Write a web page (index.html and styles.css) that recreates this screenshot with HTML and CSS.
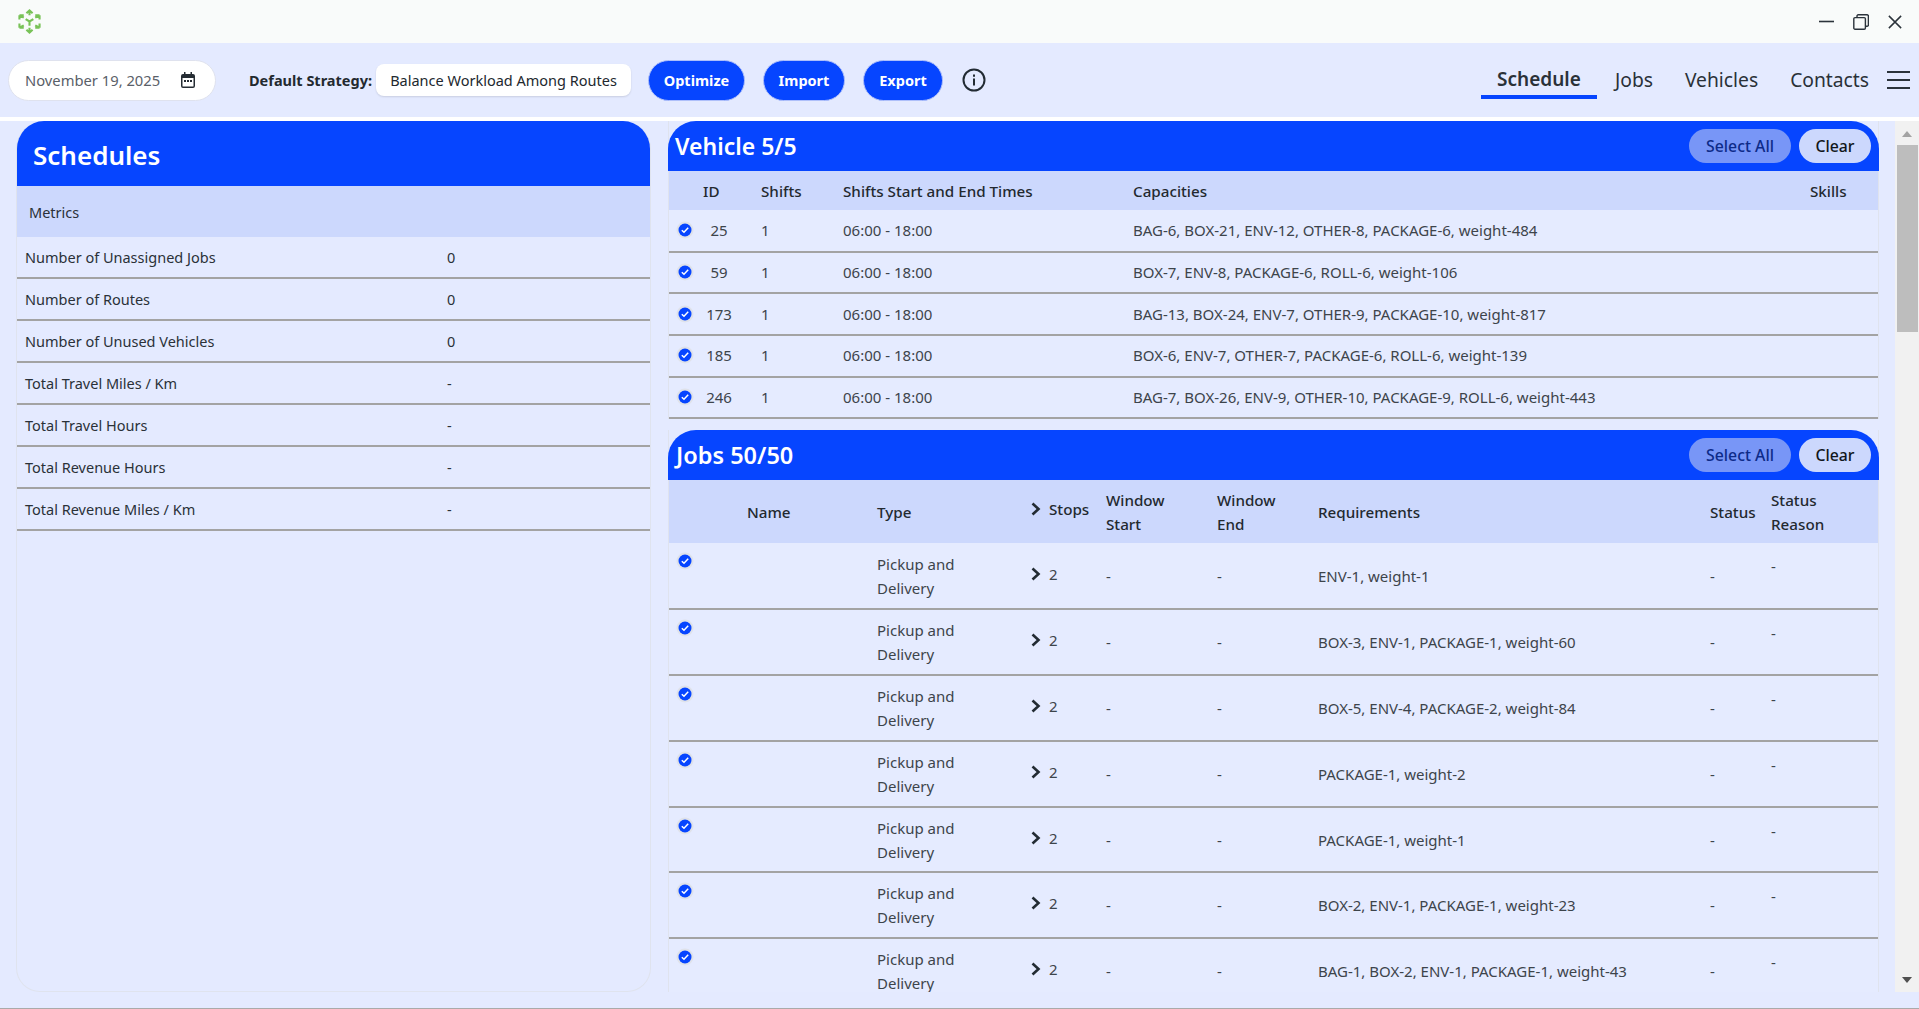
FILE: index.html
```html
<!DOCTYPE html>
<html lang="en">
<head>
<meta charset="utf-8">
<title>Schedule</title>
<link rel="stylesheet" href="styles.css">
</head>
<body>
<svg width="0" height="0" class="defs">
  <defs>
    <symbol id="chk" viewBox="0 0 18 18">
      <circle cx="9" cy="9" r="8.5" fill="#dfe2ea"/>
      <circle cx="9" cy="9" r="6.5" fill="#0645ff"/>
      <path d="M5.8 9.2 8 11.3 12.2 6.8" fill="none" stroke="#fff" stroke-width="1.5"/>
    </symbol>
    <symbol id="chev" viewBox="0 0 12 14">
      <path d="M2.500 1.500 8.500 7 2.500 12.500" fill="none" stroke="#222b33" stroke-width="2.600"/>
    </symbol>
  </defs>
</svg>
<header class="titlebar">
  <svg class="logo" viewBox="0 0 24 26" width="23" height="25" fill="none" stroke="#78c257" stroke-width="2.200">
    <path d="M12 1.500V6.500M8.800 4.500 12 1.500l3.200 3"/>
    <path d="M12 24.500V19.500M8.800 21.500 12 24.500l3.200-3"/>
    <path d="M1.500 6.500 6 9M1.500 6.500H6M1.500 6.500v4.500"/>
    <path d="M22.500 6.500 18 9M22.500 6.500H18M22.500 6.500v4.500"/>
    <path d="M1.500 19.500 6 17M1.500 19.500H6M1.500 19.500V15"/>
    <path d="M22.500 19.500 18 17M22.500 19.500H18M22.500 19.500V15"/>
    <path d="M8 10.500 12 13l4-2.500M12 13v4.500"/>
  </svg>
  <div class="winctl">
    <svg viewBox="0 0 15 15" width="15" height="15" stroke="#2b333b" fill="none" stroke-width="1.6"><path d="M0 7.500h15"/></svg>
    <svg viewBox="0 0 16 16" width="16" height="16" stroke="#2b333b" fill="none" stroke-width="1.4"><rect x=".8" y="3.6" width="11.6" height="11.6" rx="1.2"/><path d="M4 3.4V2a1.2 1.2 0 0 1 1.2-1.2h9A1.2 1.2 0 0 1 15.400 2v9a1.200 1.200 0 0 1-1.200 1.200h-1.600"/></svg>
    <svg viewBox="0 0 16 16" width="14" height="14" stroke="#2b333b" fill="none" stroke-width="1.7"><path d="M1 1 15 15M15 1 1 15"/></svg>
  </div>
</header>

<nav class="toolbar">
  <div class="datepill">
    <span>November 19, 2025</span>
    <svg viewBox="0 0 16 16" width="16" height="16"><path fill="#252c33" d="M4 0h1.500v2h5V0H12v2h1a2 2 0 0 1 2 2v10a2 2 0 0 1-2 2H3a2 2 0 0 1-2-2V4a2 2 0 0 1 2-2h1zM2.500 6v8a.5.5 0 0 0 .5.5h10a.5.5 0 0 0 .5-.5V6z"/><path fill="#252c33" d="M4 8h2v2H4zM7 8h2v2H7zM10 8h2v2h-2z"/></svg>
  </div>
  <label class="strategy-label">Default Strategy:</label>
  <div class="strategy">Balance Workload Among Routes</div>
  <div class="actions">
    <button class="action w-opt">Optimize</button>
    <button class="action w-imp">Import</button>
    <button class="action w-exp">Export</button>
  </div>
  <svg class="info" viewBox="0 0 24 24" width="24" height="24" fill="none" stroke="#222b33" stroke-width="2"><circle cx="12" cy="12" r="10.500"/><path d="M12 10.500v7"/><path d="M12 6.500v2.200"/></svg>
  <div class="tabs">
    <a class="tab active">Schedule</a>
    <a class="tab">Jobs</a>
    <a class="tab">Vehicles</a>
    <a class="tab">Contacts</a>
  </div>
  <svg class="menu" viewBox="0 0 23 18" width="23" height="18" stroke="#2b333b" stroke-width="2.200"><path d="M0 1h23M0 9h23M0 17h23"/></svg>
</nav>
<div class="whiteline"></div>

<main class="content">
  <section class="schedules">
    <h1 class="sched-title">Schedules</h1>
    <div class="metrics-head">Metrics</div>
    <div class="mrow"><span>Number of Unassigned Jobs</span><span>0</span></div>
    <div class="mrow"><span>Number of Routes</span><span>0</span></div>
    <div class="mrow"><span>Number of Unused Vehicles</span><span>0</span></div>
    <div class="mrow"><span>Total Travel Miles / Km</span><span>-</span></div>
    <div class="mrow"><span>Total Travel Hours</span><span>-</span></div>
    <div class="mrow"><span>Total Revenue Hours</span><span>-</span></div>
    <div class="mrow"><span>Total Revenue Miles / Km</span><span>-</span></div>
  </section>

  <div class="scrollarea">
    <section class="card">
      <div class="cardhead"><h2>Vehicle 5/5</h2><div class="cardbtns"><button class="selall">Select All</button><button class="clear">Clear</button></div></div>
      <table class="vt">
        <thead><tr><th class="v0"></th><th class="v1">ID</th><th class="v2">Shifts</th><th class="v3">Shifts Start and End Times</th><th class="v4">Capacities</th><th class="v5">Skills</th></tr></thead>
        <tbody>
          <tr><td class="chk"><svg width="18" height="18"><use href="#chk"/></svg></td><td class="num">25</td><td>1</td><td>06:00 - 18:00</td><td>BAG-6, BOX-21, ENV-12, OTHER-8, PACKAGE-6, weight-484</td><td></td></tr>
          <tr><td class="chk"><svg width="18" height="18"><use href="#chk"/></svg></td><td class="num">59</td><td>1</td><td>06:00 - 18:00</td><td>BOX-7, ENV-8, PACKAGE-6, ROLL-6, weight-106</td><td></td></tr>
          <tr><td class="chk"><svg width="18" height="18"><use href="#chk"/></svg></td><td class="num">173</td><td>1</td><td>06:00 - 18:00</td><td>BAG-13, BOX-24, ENV-7, OTHER-9, PACKAGE-10, weight-817</td><td></td></tr>
          <tr><td class="chk"><svg width="18" height="18"><use href="#chk"/></svg></td><td class="num">185</td><td>1</td><td>06:00 - 18:00</td><td>BOX-6, ENV-7, OTHER-7, PACKAGE-6, ROLL-6, weight-139</td><td></td></tr>
          <tr><td class="chk"><svg width="18" height="18"><use href="#chk"/></svg></td><td class="num">246</td><td>1</td><td>06:00 - 18:00</td><td>BAG-7, BOX-26, ENV-9, OTHER-10, PACKAGE-9, ROLL-6, weight-443</td><td></td></tr>
        </tbody>
      </table>
    </section>

    <section class="card jobs">
      <div class="cardhead"><h2>Jobs 50/50</h2><div class="cardbtns"><button class="selall">Select All</button><button class="clear">Clear</button></div></div>
      <table class="jt">
        <thead><tr><th class="j0"></th><th class="j1">Name</th><th class="j2">Type</th><th class="j3"><span class="stops"><svg width="12" height="14"><use href="#chev"/></svg>Stops</span></th><th class="j4">Window Start</th><th class="j5">Window End</th><th class="j6">Requirements</th><th class="j7">Status</th><th class="j8">Status Reason</th></tr></thead>
        <tbody>
          <tr><td class="top chk"><svg width="18" height="18"><use href="#chk"/></svg></td><td></td><td class="type">Pickup and Delivery</td><td><span class="stops"><svg width="12" height="14"><use href="#chev"/></svg>2</span></td><td>-</td><td>-</td><td>ENV-1, weight-1</td><td>-</td><td class="top">-</td></tr>
          <tr><td class="top chk"><svg width="18" height="18"><use href="#chk"/></svg></td><td></td><td class="type">Pickup and Delivery</td><td><span class="stops"><svg width="12" height="14"><use href="#chev"/></svg>2</span></td><td>-</td><td>-</td><td>BOX-3, ENV-1, PACKAGE-1, weight-60</td><td>-</td><td class="top">-</td></tr>
          <tr><td class="top chk"><svg width="18" height="18"><use href="#chk"/></svg></td><td></td><td class="type">Pickup and Delivery</td><td><span class="stops"><svg width="12" height="14"><use href="#chev"/></svg>2</span></td><td>-</td><td>-</td><td>BOX-5, ENV-4, PACKAGE-2, weight-84</td><td>-</td><td class="top">-</td></tr>
          <tr><td class="top chk"><svg width="18" height="18"><use href="#chk"/></svg></td><td></td><td class="type">Pickup and Delivery</td><td><span class="stops"><svg width="12" height="14"><use href="#chev"/></svg>2</span></td><td>-</td><td>-</td><td>PACKAGE-1, weight-2</td><td>-</td><td class="top">-</td></tr>
          <tr><td class="top chk"><svg width="18" height="18"><use href="#chk"/></svg></td><td></td><td class="type">Pickup and Delivery</td><td><span class="stops"><svg width="12" height="14"><use href="#chev"/></svg>2</span></td><td>-</td><td>-</td><td>PACKAGE-1, weight-1</td><td>-</td><td class="top">-</td></tr>
          <tr><td class="top chk"><svg width="18" height="18"><use href="#chk"/></svg></td><td></td><td class="type">Pickup and Delivery</td><td><span class="stops"><svg width="12" height="14"><use href="#chev"/></svg>2</span></td><td>-</td><td>-</td><td>BOX-2, ENV-1, PACKAGE-1, weight-23</td><td>-</td><td class="top">-</td></tr>
          <tr><td class="top chk"><svg width="18" height="18"><use href="#chk"/></svg></td><td></td><td class="type">Pickup and Delivery</td><td><span class="stops"><svg width="12" height="14"><use href="#chev"/></svg>2</span></td><td>-</td><td>-</td><td>BAG-1, BOX-2, ENV-1, PACKAGE-1, weight-43</td><td>-</td><td class="top">-</td></tr>
        </tbody>
      </table>
    </section>
  </div>

  <div class="scrollbar">
    <div class="arrow up"></div>
    <div class="thumb"></div>
    <div class="arrow down"></div>
  </div>
</main>
</body>
</html>
```

FILE: styles.css
```css
* { box-sizing: border-box; }
html, body { margin: 0; height: 100%; overflow: hidden; }
body {
  background: #e4eaff;
  color: #2a3138;
  font-family: "Noto Sans", "Liberation Sans", sans-serif;
  font-size: 14.500px;
  height: 1009px;
  display: flex;
  flex-direction: column;
  border-bottom: 1px solid #aaaaaa;
}
.defs { position: absolute; }
button { font-family: inherit; border: 0; }

.titlebar {
  height: 43px;
  background: #f9fbfa;
  display: flex;
  align-items: center;
  justify-content: space-between;
  padding: 0 17px 0 18px;
  flex: none;
}
.winctl { display: flex; align-items: center; gap: 19px; }

.toolbar {
  height: 74px;
  flex: none;
  background: #e4eaff;
  display: flex;
  align-items: center;
  padding: 0 9px 0 8px;
}
.datepill {
  width: 208px;
  height: 41px;
  background: #fff;
  border: 1px solid #dfe2ee;
  border-radius: 21px;
  display: flex;
  align-items: center;
  justify-content: space-between;
  padding: 0 19px 0 16px;
  color: #5a6068;
  font-size: 14.750px;
}
.strategy-label { margin-left: 33px; font-weight: 700; width: 127px; white-space: nowrap; color: #23292f; }
.strategy {
  width: 255px;
  height: 32px;
  background: #fff;
  border-radius: 8px;
  box-shadow: 0 1px 2px rgba(0,0,0,.12);
  display: flex;
  align-items: center;
  justify-content: center;
  white-space: nowrap;
  color: #22282e;
}
.actions { display: flex; gap: 18px; margin-left: 17px; }
.action {
  height: 41px;
  border-radius: 21px;
  background: #0645ff;
  color: #fff;
  font-weight: 700;
  font-size: 14.500px;
  border: 1px solid #aebffa;
  padding: 0;
}
.w-opt { width: 97px; }
.w-imp { width: 82px; }
.w-exp { width: 80px; }
.info { margin-left: 19px; }
.tabs { margin-left: auto; margin-right: 2px; display: flex; align-items: center; }
.tab { font-size: 19.250px; color: #2a3138; padding: 0 16px; height: 36px; line-height: 36px; }
.tab.active {
  font-size: 19px;
  font-weight: 600;
  width: 116px;
  padding: 0;
  text-align: center;
  border-bottom: 4px solid #0645ff;
  line-height: 32px;
  margin-top: 2px;
  margin-right: 2px;
}

.whiteline { height: 4px; background: #fff; flex: none; }

.content { display: flex; flex: 1; min-height: 0; align-items: flex-start; padding-bottom: 16px; }

.schedules {
  width: 635px;
  height: 871px;
  margin-left: 16px;
  border: 1px solid #dfe3ee;
  border-top: 0;
  border-radius: 28px 28px 24px 24px;
  overflow: hidden;
  flex: none;
}
.sched-title {
  margin: 0;
  height: 65px;
  background: #0645ff;
  color: #fff;
  font-size: 26px;
  font-weight: 600;
  line-height: 69px;
  padding-left: 16px;
}
.metrics-head { height: 51px; background: #ccd8fd; line-height: 52px; padding-left: 12px; }
.mrow {
  height: 42px;
  border-bottom: 2px solid #a3a3a3;
  display: flex;
  align-items: center;
  padding-left: 8px;
}
.mrow span:first-child { width: 422px; }

.scrollarea {
  width: 1211px;
  margin-left: 17px;
  height: 871px;
  overflow: hidden;
  flex: none;
}
.card { border-right: 1px solid #dfe3ee; border-left: 1px solid #dfe3ee; }
.card.jobs { margin-top: 11px; }
.cardhead {
  height: 50px;
  background: #0645ff;
  border-radius: 28px 28px 0 0;
  display: flex;
  align-items: center;
  justify-content: space-between;
  padding: 0 8px 0 7px;
  margin: 0 -1px;
}
.cardhead h2 { margin: 0; color: #fff; font-size: 23px; font-weight: 600; }
.jobs .cardhead h2 { font-size: 23.500px; margin-left: 1px; }
.cardbtns { display: flex; gap: 8px; }
.selall, .clear { height: 34px; border-radius: 17px; font-size: 15.800px; font-weight: 500; padding: 0; }
.selall { width: 102px; background: #7896f7; color: #0d2a88; }
.clear { width: 72px; background: #ccd8fd; color: #11161b; }

table { border-collapse: collapse; table-layout: fixed; width: 100%; }
th { background: #ccd8fd; font-weight: 500; font-size: 15.200px; text-align: left; padding: 0; color: #23292f; line-height: 24px; }
td { padding: 0; color: #3d444b; font-size: 15px; line-height: 24px; }
tbody tr { border-bottom: 2px solid #a3a3a3; background: #e5ebff; }

.vt thead tr { height: 39px; }
.vt tbody tr { height: 41.700px; }
.vt td { padding-bottom: 1px; }
.v0 { width: 34px; }
.v1 { width: 58px; }
.v2 { width: 82px; }
.v3 { width: 290px; }
.v4 { width: 677px; }
.vt .num { padding-right: 26px; text-align: center; }
.chk { padding-left: 7px; line-height: 0; }
.chk svg { display: block; }

.jt thead tr { height: 63px; }
.jt tbody tr { height: 65.800px; }
.j0 { width: 78px; }
.j1 { width: 130px; }
.j2 { width: 153px; }
.j3 { width: 76px; padding-bottom: 6px; }
.j4 { width: 111px; padding-right: 30px; }
.j5 { width: 101px; padding-right: 30px; }
.j6 { width: 392px; }
.j7 { width: 61px; }
.j8 { padding-right: 20px; }
.type { padding-right: 50px; }
.jt td { vertical-align: middle; }
.jt td.top { vertical-align: top; padding-top: 11px; }
.jt td.chk { padding-top: 9px; }
.stops { display: flex; align-items: center; gap: 7px; white-space: nowrap; }
td .stops { margin-top: -4px; }

.scrollbar {
  width: 24px;
  height: 871px;
  margin-left: auto;
  background: #f1f1f1;
  display: flex;
  flex-direction: column;
  align-items: center;
  flex: none;
}
.arrow { width: 0; height: 0; border-left: 5.500px solid transparent; border-right: 5.500px solid transparent; }
.arrow.up { border-bottom: 6px solid #a3a3a3; margin-top: 10px; }
.arrow.down { border-top: 6px solid #505050; margin-top: auto; margin-bottom: 9px; }
.thumb { width: 21px; height: 187px; background: #bdbdbd; margin-top: 8px; }
```
